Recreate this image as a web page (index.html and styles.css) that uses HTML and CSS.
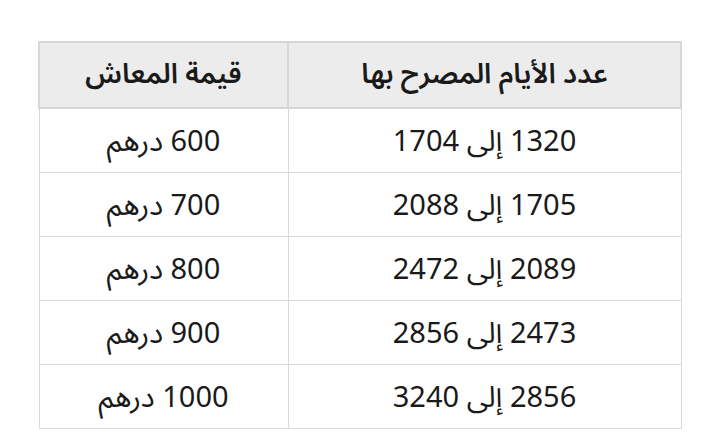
FILE: index.html
```html
<!DOCTYPE html>
<html lang="ar" dir="rtl">
<head>
<meta charset="utf-8">
<link rel="stylesheet" href="styles.css">
</head>
<body>
<div class="page">
<table class="pension">
<thead>
<tr><th class="days">عدد الأيام المصرح بها</th><th class="amount">قيمة المعاش</th></tr>
</thead>
<tbody>
<tr><td>1320 إلى 1704</td><td>600 درهم</td></tr>
<tr><td>1705 إلى 2088</td><td>700 درهم</td></tr>
<tr><td>2089 إلى 2472</td><td>800 درهم</td></tr>
<tr><td>2473 إلى 2856</td><td>900 درهم</td></tr>
<tr><td>2856 إلى 3240</td><td>1000 درهم</td></tr>
</tbody>
</table>
</div>
</body>
</html>
```
FILE: styles.css
```css
html, body {
  margin: 0;
  padding: 0;
  background: #ffffff;
}
.page {
  padding: 41px 37px 0 38px;
  font-family: "Noto Sans Arabic", "DejaVu Sans", "Noto Sans", sans-serif;
  color: #1a1a1a;
}
.pension {
  width: 644px;
  border-collapse: collapse;
  direction: rtl;
}
.pension th {
  background: #ececec;
  height: 66px;
  font-size: 28px;
  line-height: 36px;
  font-weight: 600;
  border: 2px solid #d6d6d6;
  padding: 0;
  box-sizing: border-box;
  text-align: center;
}
.pension th.days {
  width: 393px;
}
.pension td {
  height: 64px;
  font-size: 29px;
  line-height: 36px;
  font-weight: 400;
  border: 1px solid #d9d9d9;
  padding: 4px 0 0 0;
  box-sizing: border-box;
  text-align: center;
}
```
